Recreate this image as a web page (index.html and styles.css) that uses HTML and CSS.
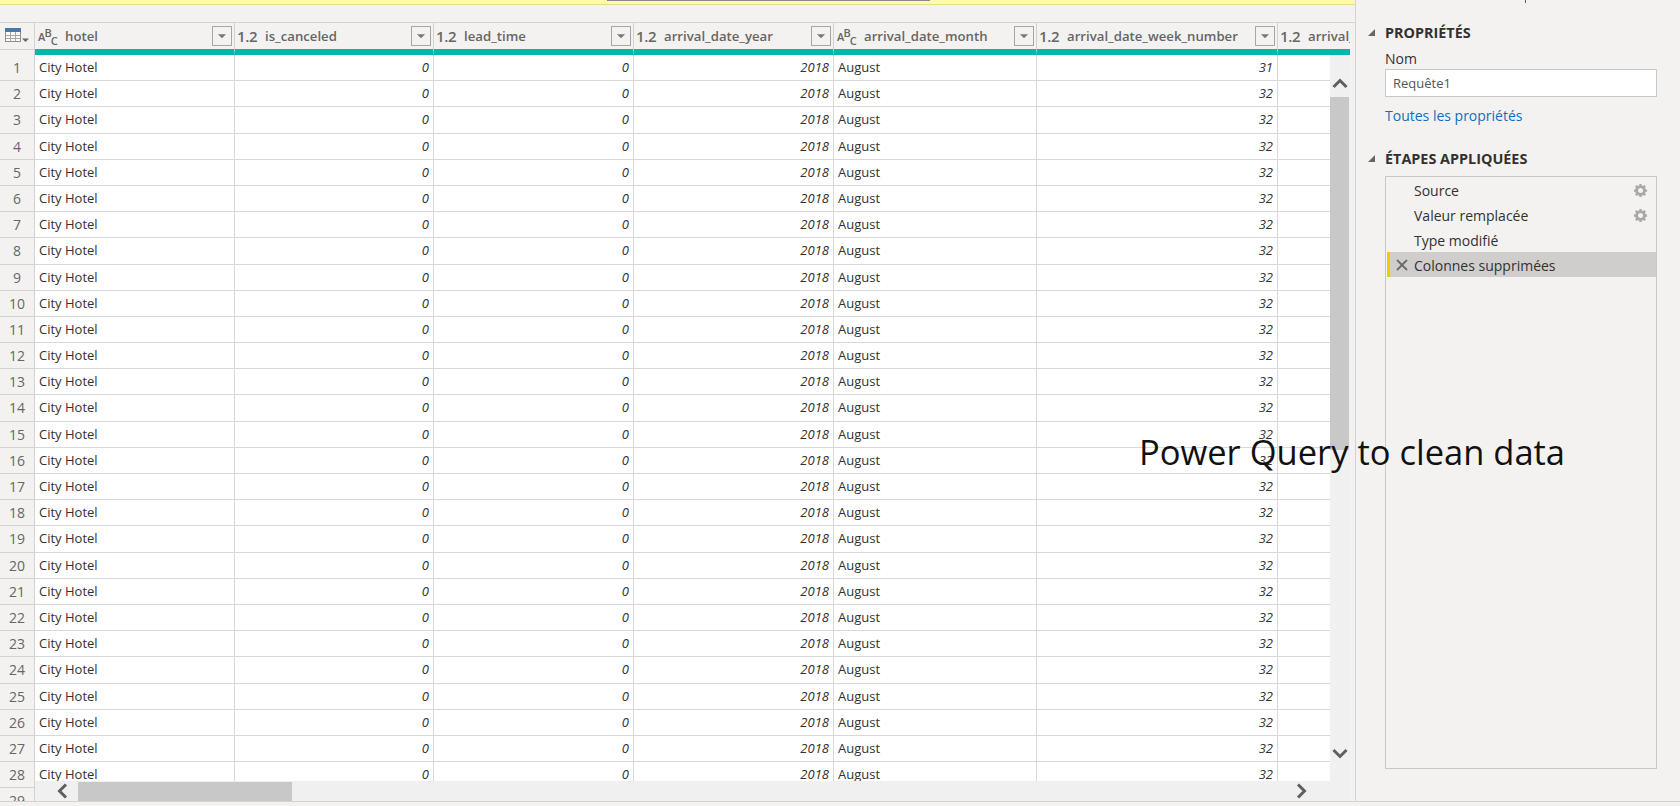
FILE: index.html
```html
<!DOCTYPE html>
<html lang="fr">
<head>
  <meta charset="UTF-8">
  <meta name="viewport" content="width=device-width, initial-scale=1.0">
  <title>Power Query to clean data</title>
  <link rel="stylesheet" href="styles.css">
</head>
<body>
  <svg class="defs" width="0" height="0">
    <symbol id="gear" viewBox="0 0 16 16">
      <circle cx="8" cy="8" r="4.2" fill="none" stroke="currentColor" stroke-width="3"/>
      <path d="M8 1v3M8 12v3M1 8h3M12 8h3M3 3l2.2 2.2M10.8 10.8L13 13M13 3l-2.2 2.2M5.2 10.8L3 13" stroke="currentColor" stroke-width="2.4"/>
    </symbol>
    <symbol id="filter" viewBox="0 0 20 20">
      <path d="M5.500 8h9L10 12.500z" fill="currentColor"/>
    </symbol>
  </svg>

  <div class="app">
    <main class="editor">
      <div class="warning"><span class="warning-btn"></span></div>
      <div class="grid">
        <div class="row-heads">
          <div class="corner">
            <svg class="table-icon" width="30" height="16" viewBox="0 0 30 16">
              <rect x="5.500" y="1.500" width="15" height="13" fill="#fafafa" stroke="#8f8f8f"/>
              <rect x="5" y="1" width="16" height="4" fill="#4a76a8"/>
              <path d="M10.500 5v9M15.500 5v9M6 8.500h14M6 11.500h14" stroke="#a8a8a8"/>
              <path d="M22 11.500h7L25.500 15z" fill="#666"/>
            </svg>
          </div>
          <div class="row-head">1</div><div class="row-head">2</div><div class="row-head">3</div><div class="row-head">4</div><div class="row-head">5</div>
          <div class="row-head">6</div><div class="row-head">7</div><div class="row-head">8</div><div class="row-head">9</div><div class="row-head">10</div>
          <div class="row-head">11</div><div class="row-head">12</div><div class="row-head">13</div><div class="row-head">14</div><div class="row-head">15</div>
          <div class="row-head">16</div><div class="row-head">17</div><div class="row-head">18</div><div class="row-head">19</div><div class="row-head">20</div>
          <div class="row-head">21</div><div class="row-head">22</div><div class="row-head">23</div><div class="row-head">24</div><div class="row-head">25</div>
          <div class="row-head">26</div><div class="row-head">27</div><div class="row-head">28</div><div class="row-head">29</div>
        </div>

        <div class="data">
          <div class="cols">
            <div class="col-head"><span class="type type-abc"><i class="low">A</i><i>B</i><i class="lower">C</i></span><span class="name">hotel</span><span class="filter"><svg width="18" height="18"><use href="#filter"/></svg></span></div>
            <div class="col-head"><span class="type">1.2</span><span class="name">is_canceled</span><span class="filter"><svg width="18" height="18"><use href="#filter"/></svg></span></div>
            <div class="col-head"><span class="type">1.2</span><span class="name">lead_time</span><span class="filter"><svg width="18" height="18"><use href="#filter"/></svg></span></div>
            <div class="col-head"><span class="type">1.2</span><span class="name">arrival_date_year</span><span class="filter"><svg width="18" height="18"><use href="#filter"/></svg></span></div>
            <div class="col-head"><span class="type type-abc"><i class="low">A</i><i>B</i><i class="lower">C</i></span><span class="name">arrival_date_month</span><span class="filter"><svg width="18" height="18"><use href="#filter"/></svg></span></div>
            <div class="col-head"><span class="type">1.2</span><span class="name">arrival_date_week_number</span><span class="filter"><svg width="18" height="18"><use href="#filter"/></svg></span></div>
            <div class="col-head col-last"><span class="type">1.2</span><span class="name">arrival_date_day_of_month</span></div>
          </div>

          <div class="body">
            <div class="rows">
              <div class="row"><span>City Hotel</span><span class="num">0</span><span class="num">0</span><span class="num">2018</span><span>August</span><span class="num">31</span><span></span></div>
              <div class="row"><span>City Hotel</span><span class="num">0</span><span class="num">0</span><span class="num">2018</span><span>August</span><span class="num">32</span><span></span></div>
              <div class="row"><span>City Hotel</span><span class="num">0</span><span class="num">0</span><span class="num">2018</span><span>August</span><span class="num">32</span><span></span></div>
              <div class="row"><span>City Hotel</span><span class="num">0</span><span class="num">0</span><span class="num">2018</span><span>August</span><span class="num">32</span><span></span></div>
              <div class="row"><span>City Hotel</span><span class="num">0</span><span class="num">0</span><span class="num">2018</span><span>August</span><span class="num">32</span><span></span></div>
              <div class="row"><span>City Hotel</span><span class="num">0</span><span class="num">0</span><span class="num">2018</span><span>August</span><span class="num">32</span><span></span></div>
              <div class="row"><span>City Hotel</span><span class="num">0</span><span class="num">0</span><span class="num">2018</span><span>August</span><span class="num">32</span><span></span></div>
              <div class="row"><span>City Hotel</span><span class="num">0</span><span class="num">0</span><span class="num">2018</span><span>August</span><span class="num">32</span><span></span></div>
              <div class="row"><span>City Hotel</span><span class="num">0</span><span class="num">0</span><span class="num">2018</span><span>August</span><span class="num">32</span><span></span></div>
              <div class="row"><span>City Hotel</span><span class="num">0</span><span class="num">0</span><span class="num">2018</span><span>August</span><span class="num">32</span><span></span></div>
              <div class="row"><span>City Hotel</span><span class="num">0</span><span class="num">0</span><span class="num">2018</span><span>August</span><span class="num">32</span><span></span></div>
              <div class="row"><span>City Hotel</span><span class="num">0</span><span class="num">0</span><span class="num">2018</span><span>August</span><span class="num">32</span><span></span></div>
              <div class="row"><span>City Hotel</span><span class="num">0</span><span class="num">0</span><span class="num">2018</span><span>August</span><span class="num">32</span><span></span></div>
              <div class="row"><span>City Hotel</span><span class="num">0</span><span class="num">0</span><span class="num">2018</span><span>August</span><span class="num">32</span><span></span></div>
              <div class="row"><span>City Hotel</span><span class="num">0</span><span class="num">0</span><span class="num">2018</span><span>August</span><span class="num">32</span><span></span></div>
              <div class="row"><span>City Hotel</span><span class="num">0</span><span class="num">0</span><span class="num">2018</span><span>August</span><span class="num">32</span><span></span></div>
              <div class="row"><span>City Hotel</span><span class="num">0</span><span class="num">0</span><span class="num">2018</span><span>August</span><span class="num">32</span><span></span></div>
              <div class="row"><span>City Hotel</span><span class="num">0</span><span class="num">0</span><span class="num">2018</span><span>August</span><span class="num">32</span><span></span></div>
              <div class="row"><span>City Hotel</span><span class="num">0</span><span class="num">0</span><span class="num">2018</span><span>August</span><span class="num">32</span><span></span></div>
              <div class="row"><span>City Hotel</span><span class="num">0</span><span class="num">0</span><span class="num">2018</span><span>August</span><span class="num">32</span><span></span></div>
              <div class="row"><span>City Hotel</span><span class="num">0</span><span class="num">0</span><span class="num">2018</span><span>August</span><span class="num">32</span><span></span></div>
              <div class="row"><span>City Hotel</span><span class="num">0</span><span class="num">0</span><span class="num">2018</span><span>August</span><span class="num">32</span><span></span></div>
              <div class="row"><span>City Hotel</span><span class="num">0</span><span class="num">0</span><span class="num">2018</span><span>August</span><span class="num">32</span><span></span></div>
              <div class="row"><span>City Hotel</span><span class="num">0</span><span class="num">0</span><span class="num">2018</span><span>August</span><span class="num">32</span><span></span></div>
              <div class="row"><span>City Hotel</span><span class="num">0</span><span class="num">0</span><span class="num">2018</span><span>August</span><span class="num">32</span><span></span></div>
              <div class="row"><span>City Hotel</span><span class="num">0</span><span class="num">0</span><span class="num">2018</span><span>August</span><span class="num">32</span><span></span></div>
              <div class="row"><span>City Hotel</span><span class="num">0</span><span class="num">0</span><span class="num">2018</span><span>August</span><span class="num">32</span><span></span></div>
              <div class="row"><span>City Hotel</span><span class="num">0</span><span class="num">0</span><span class="num">2018</span><span>August</span><span class="num">32</span><span></span></div>
            </div>
            <div class="vscroll">
              <svg class="chevron-up" width="16" height="12" viewBox="0 0 16 12"><path d="M1.500 10L8 3.500l6.500 6.500" fill="none" stroke="#5f5f5f" stroke-width="3"/></svg>
              <div class="vthumb"></div>
              <svg class="chevron-down" width="16" height="12" viewBox="0 0 16 12"><path d="M1.500 2L8 8.500 14.500 2" fill="none" stroke="#5f5f5f" stroke-width="3"/></svg>
            </div>
          </div>

          <div class="hscroll">
            <svg class="chevron-left" width="12" height="16" viewBox="0 0 12 16"><path d="M10 1.500L3.500 8l6.500 6.500" fill="none" stroke="#5f5f5f" stroke-width="3"/></svg>
            <div class="hthumb"></div>
            <svg class="chevron-right" width="12" height="16" viewBox="0 0 12 16"><path d="M2 1.500L8.500 8 2 14.500" fill="none" stroke="#5f5f5f" stroke-width="3"/></svg>
          </div>
        </div>
      </div>
    </main>

    <aside class="side">
      <span class="side-tick"></span>
      <h2 class="side-title">PROPRIÉTÉS</h2>
      <label class="field-label" for="query-name">Nom</label>
      <input class="field" id="query-name" value="Requête1">
      <a class="all-props" href="#">Toutes les propriétés</a>
      <h2 class="side-title steps-title">ÉTAPES APPLIQUÉES</h2>
      <ul class="steps">
        <li class="step">Source<svg class="gear" width="15" height="15"><use href="#gear"/></svg></li>
        <li class="step">Valeur remplacée<svg class="gear" width="15" height="15"><use href="#gear"/></svg></li>
        <li class="step">Type modifié</li>
        <li class="step step-active"><svg class="step-x" width="12" height="12" viewBox="0 0 12 12"><path d="M1 1l10 10M11 1L1 11" stroke="#6b6b6b" stroke-width="1.800"/></svg>Colonnes supprimées</li>
      </ul>
    </aside>

    <div class="caption">Power Query to clean data</div>
  </div>
</body>
</html>
```

FILE: styles.css
```css
* {
  box-sizing: border-box;
}
html, body {
  margin: 0;
  height: 100%;
  overflow: hidden;
}
body {
  font-family: "Open Sans", sans-serif;
  background-color: #f3f2f1;
  color: #323130;
}
.defs {
  display: block;
}

.app {
  position: relative;
  display: flex;
  height: 802px;
  border-bottom: 1px solid #d2d2d2;
}

/* left part */
.editor {
  width: 1355px;
  display: flex;
  flex-direction: column;
}
.warning {
  height: 5px;
  background-color: #fdf9ad;
  border-bottom: 1px solid #e4de88;
  padding-left: 607px;
}
.warning-btn {
  display: block;
  width: 323px;
  height: 1px;
  background-color: #8a8a86;
}
.grid {
  display: flex;
  margin-top: 17px;
  height: 779px;
  border-top: 1px solid #d2d2d2;
}

.row-heads {
  width: 35px;
  border-right: 1px solid #d2d2d2;
  overflow: hidden;
}
.corner {
  height: 27px;
  margin-bottom: 5px;
  padding-top: 4px;
  border-bottom: 1px solid #d2d2d2;
}
.table-icon {
  display: block;
}
.row-head {
  height: 26.19px;
  border-bottom: 1px solid #d2d2d2;
  font-size: 14px;
  line-height: 25px;
  text-align: center;
  color: #666;
}

.data {
  width: 1315px;
  display: flex;
  flex-direction: column;
}
.cols {
  display: grid;
  grid-template-columns: 200px 199px 200px 200px 203px 241px 72px;
  height: 32px;
  flex: none;
}
.col-head {
  display: flex;
  align-items: center;
  height: 32px;
  padding: 0 2px 0 2px;
  border-right: 1px solid #d2d2d2;
  border-bottom: 6px solid #01b8aa;
  overflow: hidden;
  white-space: nowrap;
}
.col-last {
  border-right: 0;
}
.type {
  flex: none;
  width: 28px;
  font-size: 15px;
  font-weight: 600;
  color: #666;
  letter-spacing: -0.3px;
}
.type-abc {
  display: flex;
  align-items: flex-start;
  height: 18px;
  padding-left: 1px;
  font-size: 11px;
  letter-spacing: -0.9px;
}
.type-abc i {
  font-style: normal;
  line-height: 11px;
}
.type-abc .low {
  margin-top: 4px;
}
.type-abc .lower {
  margin-top: 8px;
}
.name {
  flex: 1;
  min-width: 0;
  font-size: 13.2px;
  font-weight: 600;
  color: #666;
}
.filter {
  flex: none;
  display: block;
  width: 20px;
  height: 20px;
  border: 1px solid #a6a6a6;
  color: #777;
}
.filter svg {
  display: block;
}

.body {
  display: flex;
  flex: 1;
  min-height: 0;
}
.rows {
  width: 1295px;
  background-color: #fff;
  overflow: hidden;
}
.row {
  display: grid;
  grid-template-columns: 200px 199px 200px 200px 203px 241px 52px;
  height: 26.19px;
  border-bottom: 1px solid #d8d8d8;
  font-size: 13px;
  line-height: 25px;
  color: #323130;
}
.row span {
  padding: 0 4px;
  border-right: 1px solid #d8d8d8;
  white-space: nowrap;
}
.row span:last-child {
  border-right: 0;
}
.row .num {
  text-align: right;
  font-style: italic;
}

.vscroll {
  width: 20px;
  background-color: #f0f0f0;
  display: flex;
  flex-direction: column;
  align-items: flex-start;
  padding-top: 22px;
}
.chevron-up, .chevron-down {
  display: block;
  flex: none;
  margin-left: 2px;
}
.vthumb {
  width: 19px;
  height: 353px;
  margin-top: 8px;
  background-color: #c8c8c8;
}
.chevron-down {
  margin-top: auto;
  margin-bottom: 21px;
}

.hscroll {
  flex: none;
  display: flex;
  align-items: center;
  height: 20px;
  background-color: #f0f0f0;
  padding-left: 21px;
  padding-right: 42px;
}
.hthumb {
  width: 214px;
  height: 19px;
  margin-left: 10px;
  background-color: #c8c8c8;
}
.chevron-right {
  margin-left: auto;
}

/* right panel */
.side {
  position: relative;
  width: 325px;
  border-left: 1px solid #d2d2d2;
  padding: 22px 23px 0 29px;
}
.side-tick {
  position: absolute;
  left: 169px;
  top: 0;
  width: 1px;
  height: 3px;
  background-color: #6b5a4a;
}
.side-title {
  position: relative;
  margin: 0;
  font-size: 14.4px;
  font-weight: 700;
  line-height: 22px;
  color: #323130;
}
.side-title::before {
  content: "";
  position: absolute;
  left: -17px;
  top: 7px;
  border-style: solid;
  border-width: 0 0 7px 7px;
  border-color: transparent transparent #666 transparent;
}
.field-label {
  display: block;
  margin-top: 5px;
  font-size: 14px;
  line-height: 20px;
}
.field {
  display: block;
  width: 100%;
  height: 28px;
  margin-top: 0;
  padding: 0 7px;
  border: 1px solid #c8c8c8;
  background-color: #fff;
  font-family: inherit;
  font-size: 13px;
  color: #555;
}
.all-props {
  display: block;
  margin-top: 9px;
  font-size: 14px;
  line-height: 20px;
  color: #106ebe;
  text-decoration: none;
}
.steps-title {
  margin-top: 22px;
}
.steps {
  list-style: none;
  margin: 6px 0 0;
  padding: 0;
  height: 593px;
  border: 1px solid #c8c8c8;
}
.step {
  position: relative;
  height: 25px;
  padding-left: 28px;
  font-size: 14px;
  line-height: 27px;
}
.gear {
  position: absolute;
  right: 8px;
  top: 6px;
  color: #a8a8a8;
}
.step-active {
  background-color: #cfcecd;
  border-left: 3px solid #f2c811;
  margin-left: 1px;
  padding-left: 24px;
}
.step-x {
  position: absolute;
  left: 6px;
  top: 7px;
}

/* text laid over the screenshot */
.caption {
  position: absolute;
  left: 1139px;
  top: 429px;
  font-size: 34.5px;
  line-height: 46px;
  color: #111;
  white-space: nowrap;
}
```
